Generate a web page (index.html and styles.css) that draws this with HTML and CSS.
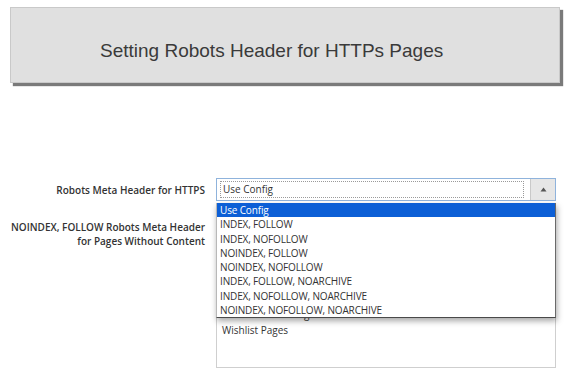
FILE: index.html
```html
<!DOCTYPE html>
<html>
<head>
<meta charset="utf-8">
<link rel="stylesheet" href="styles.css">
</head>
<body>
<div class="banner"><span class="banner-title">Setting Robots Header for HTTPs Pages</span></div>

<div class="form">
  <div class="row row-first">
    <div class="label">Robots Meta Header for HTTPS</div>
    <div class="field">
      <div class="select">
        <div class="select-value">Use Config</div>
        <div class="select-btn"><svg width="7" height="5" viewBox="0 0 7 5"><path d="M3.5 0.5 L6.5 4.5 L0.5 4.5 Z" fill="#555"/></svg></div>
      </div>
      <ul class="menu">
        <li class="menu-item selected">Use Config</li>
        <li class="menu-item">INDEX, FOLLOW</li>
        <li class="menu-item">INDEX, NOFOLLOW</li>
        <li class="menu-item">NOINDEX, FOLLOW</li>
        <li class="menu-item">NOINDEX, NOFOLLOW</li>
        <li class="menu-item">INDEX, FOLLOW, NOARCHIVE</li>
        <li class="menu-item">INDEX, NOFOLLOW, NOARCHIVE</li>
        <li class="menu-item">NOINDEX, NOFOLLOW, NOARCHIVE</li>
      </ul>
    </div>
  </div>
  <div class="row row-second">
    <div class="label">NOINDEX, FOLLOW Robots Meta Header<br>for Pages Without Content</div>
    <div class="field">
      <div class="listbox">
        <div class="list-opt">Customer Account Pages</div>
        <div class="list-opt">Product Compare Pages</div>
        <div class="list-opt">Shopping Cart Pages</div>
        <div class="list-opt">Checkout Pages</div>
        <div class="list-opt">Contact Us Page</div>
        <div class="list-opt">Search Results Pages</div>
        <div class="list-opt">Wishlist Pages</div>
      </div>
    </div>
  </div>
</div>
</body>
</html>
```
FILE: styles.css
```css
html, body {
  margin: 0;
  padding: 0;
  background: #ffffff;
}

body {
  width: 575px;
  height: 383px;
  overflow: hidden;
  font-family: "Open Sans", "Liberation Sans", sans-serif;
  color: #333333;
}

.banner {
  margin: 7px 0 0 10px;
  width: 550px;
  height: 76px;
  box-sizing: border-box;
  background: #e0e0e0;
  border: 1px solid #c9c9c9;
  box-shadow: 3px 3px 1px #7a7a7a;
  display: flex;
  align-items: center;
  padding: 12px 0 0 89px;
}

.banner-title {
  font-family: "Liberation Sans", Arial, sans-serif;
  font-size: 19px;
  color: #3a3a3a;
}

.form {
  margin-top: 95px;
}

.row {
  display: grid;
  grid-template-columns: 205px 340px;
  column-gap: 11px;
}

.label {
  text-align: right;
  font-size: 10px;
  font-weight: 600;
  line-height: 14px;
  color: #333333;
  white-space: nowrap;
}

.row-first .label {
  padding-top: 5px;
}

.row-second {
  margin-top: 19px;
}

.field {
  position: relative;
}

.select {
  height: 23px;
  box-sizing: border-box;
  border: 1px solid #8fb3dc;
  display: flex;
  background: #ffffff;
}

.select-value {
  flex: 1;
  margin: 2px 6px 2px 3px;
  border: 1px dotted #9a9a9a;
  font-size: 10px;
  line-height: 15px;
  padding-left: 2px;
}

.select-btn {
  width: 24px;
  background: #e6e6e6;
  border-left: 1px solid #c9c9c9;
  display: flex;
  align-items: center;
  justify-content: center;
}

.menu {
  position: absolute;
  left: 0;
  top: 25px;
  width: 340px;
  box-sizing: border-box;
  margin: 0;
  padding: 0;
  list-style: none;
  background: #ffffff;
  border-left: 1px solid #b8b8b8;
  border-right: 1px solid #6a6a6a;
  border-bottom: 1px solid #4a4a4a;
  box-shadow: 1px 3px 6px rgba(0, 0, 0, 0.35);
  z-index: 2;
}

.menu-item {
  height: 14.3px;
  line-height: 14.3px;
  font-size: 10px;
  letter-spacing: -0.15px;
  padding-left: 3px;
  color: #333333;
  white-space: nowrap;
}

.menu-item.selected {
  background: #0c5fd6;
  color: #ffffff;
}

.listbox {
  height: 151px;
  box-sizing: border-box;
  border: 1px solid #cfcfcf;
  padding: 8px 0 0 5px;
  overflow: hidden;
  margin-top: -3px;
}

.list-opt {
  font-size: 10px;
  line-height: 16px;
  color: #333333;
  white-space: nowrap;
}
```
